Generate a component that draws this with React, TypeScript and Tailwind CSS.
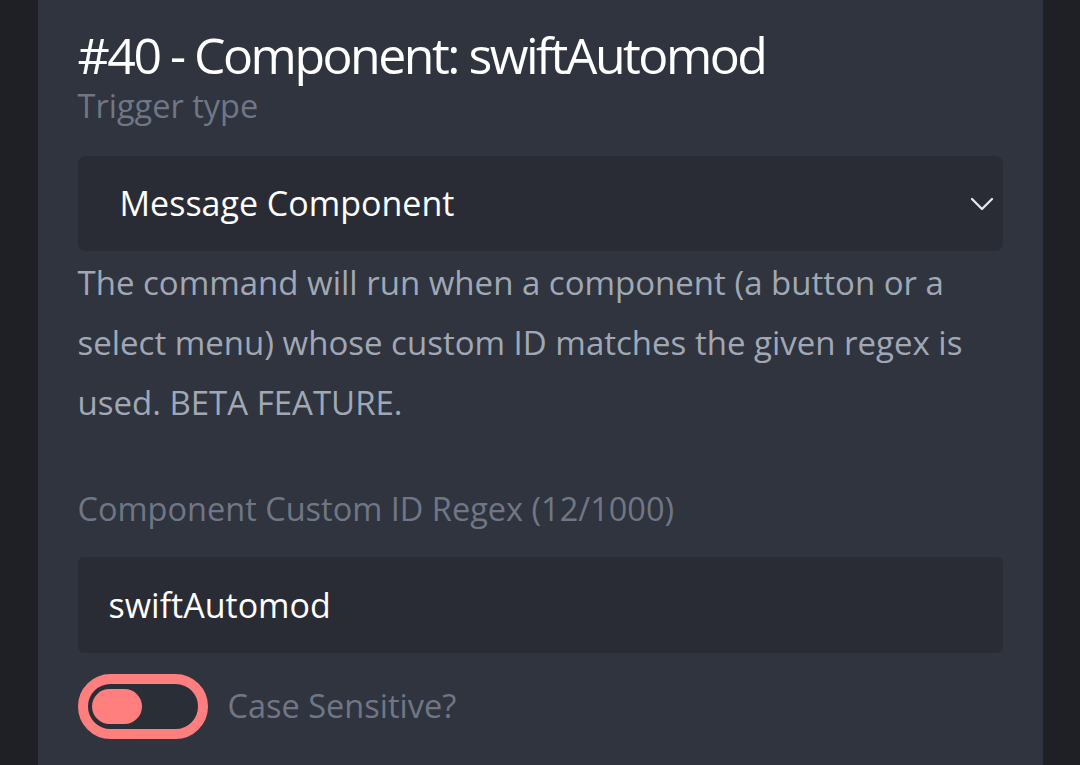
import { ChevronDown } from 'lucide-react';

export default function App() {
  return (
    <div className="w-[1080px] h-[765px] overflow-hidden bg-[#1e2026] flex justify-center" style={{ fontFamily: '"Open Sans", "Noto Sans", sans-serif' }}>
      <div className="w-[1005px] h-full bg-[#2f343e] px-10 pt-[27px]">
        <h1 className="text-[50px] leading-[56px] text-white tracking-[-2.5px]">#40 - Component: swiftAutomod</h1>
        <div className="mt-[3px] text-[32.5px] leading-[40px] text-[#6f7787]">Trigger type</div>

        {/* Trigger select */}
        <div className="mt-[30px] h-[95px] rounded-lg bg-[#292c34] flex items-center pl-[42px] pr-px">
          <span className="flex-1 text-[34px] text-white">Message Component</span>
          <ChevronDown size={40} strokeWidth={1.4} className="text-[#e5e7eb]" />
        </div>

        <p className="mt-[2px] text-[33px] leading-[60px] text-[#a1a8b5]">
          The command will run when a component (a button or a select menu) whose custom ID matches the given regex is used. BETA FEATURE.
        </p>

        <div className="mt-[56px] text-[32.5px] leading-[40px] text-[#6f7787]">Component Custom ID Regex (12/1000)</div>

        <div className="mt-[28px] h-[96px] rounded-md bg-[#292c34] flex items-center pl-[31px]">
          <span className="text-[34px] text-white">swiftAutomod</span>
        </div>

        {/* Case sensitive toggle */}
        <div className="mt-[21px] flex items-center gap-[20px]">
          <div className="w-[130px] h-[65px] rounded-full border-[10px] border-[#ff7f7f] bg-[#2a2e37] flex items-center pl-[4px]">
            <div className="w-[50px] h-[35px] rounded-full bg-[#ff7f7f]" />
          </div>
          <span className="text-[32.5px] text-[#6f7787]">Case Sensitive?</span>
        </div>
      </div>
    </div>
  );
}
